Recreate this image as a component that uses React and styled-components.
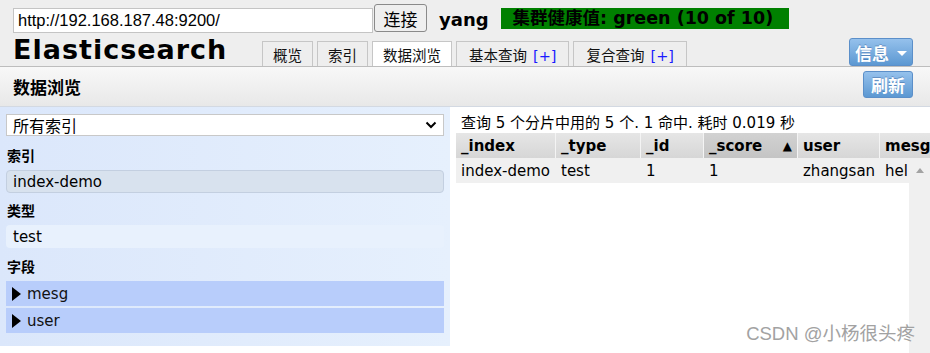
import React from 'react';
import styled, { createGlobalStyle } from 'styled-components';

const GlobalStyle = createGlobalStyle`
  html, body {
    margin: 0;
    padding: 0;
    background: #fff;
  }
  body {
    font-family: "DejaVu Sans", "Noto Sans CJK SC", sans-serif;
    font-size: 14px;
    color: #000;
  }
  * {
    box-sizing: border-box;
  }
`;

const cjk = `"DejaVu Sans", "Noto Sans CJK SC", sans-serif`;

const Page = styled.div`
  position: relative;
  width: 930px;
  height: 353px;
  overflow: hidden;
`;

const Header = styled.div`
  background: #eee;
  border-bottom: 1px solid #bdbdbd;
  height: 67px;
  padding: 4px 17px 0 13px;
  display: flex;
  flex-direction: column;
`;

const TopRow = styled.div`
  display: flex;
  align-items: flex-start;
  height: 30px;
`;

const UrlInput = styled.input`
  width: 360px;
  height: 25px;
  margin-top: 4px;
  border: 1px solid #c4c4c4;
  background: #fff;
  padding: 0 4px;
  font-family: "Liberation Sans", Arial, sans-serif;
  font-size: 16.5px;
  color: #000;
  outline: none;
`;

const ConnectButton = styled.button`
  width: 53px;
  height: 28px;
  margin-left: 1px;
  border: 1px solid #8a8a8a;
  border-radius: 3px;
  background: #efefef;
  font-family: "Noto Sans CJK SC", sans-serif;
  font-size: 17px;
  line-height: 1;
  padding: 0;
  color: #000;
`;

const UserName = styled.div`
  margin-left: 12px;
  margin-top: 6px;
  font-weight: bold;
  font-size: 18px;
  line-height: 20px;
`;

const Health = styled.div`
  margin-left: 12px;
  margin-top: 4px;
  height: 21px;
  width: 288px;
  padding-left: 12px;
  background: #008000;
  color: #000;
  font-family: ${cjk};
  font-weight: bold;
  font-size: 17.5px;
  line-height: 21px;
  white-space: nowrap;
`;

const NavRow = styled.div`
  display: flex;
  align-items: flex-end;
  flex: 1;
`;

const Brand = styled.div`
  width: 249px;
  align-self: flex-start;
  margin-top: 1px;
  font-weight: bold;
  font-size: 27px;
  letter-spacing: 1px;
  line-height: 30px;
`;

const Tabs = styled.div`
  display: flex;
  gap: 4px;
`;

const Tab = styled.div`
  height: 25px;
  padding: 0 ${({ $wide }) => ($wide ? 12 : 10)}px;
  border: 1px solid #c6c6c6;
  border-bottom: none;
  background: ${({ $active }) => ($active ? '#fff' : '#eee')};
  font-family: "Noto Sans CJK SC", sans-serif;
  font-size: 14.5px;
  line-height: 26px;
  color: #111;
  white-space: nowrap;
`;

const Plus = styled.span`
  margin-left: 6px;
  color: #1a1aff;
  font-family: "DejaVu Sans", sans-serif;
`;

const Spacer = styled.div`
  flex: 1;
`;

const BlueButton = styled.button`
  width: ${({ $w }) => $w}px;
  height: ${({ $h }) => $h}px;
  border: 1px solid #5b8fc9;
  border-radius: 3px;
  background: linear-gradient(#95c1ec, #5c98d2);
  color: #fff;
  font-family: "Noto Sans CJK SC", sans-serif;
  font-weight: bold;
  font-size: 17px;
  line-height: 1;
  padding: 0;
  display: flex;
  align-items: center;
  justify-content: center;
  gap: 8px;
  text-shadow: 0 -1px 0 rgba(40, 80, 140, 0.4);
`;

const Caret = styled.span`
  width: 0;
  height: 0;
  border-left: 5px solid transparent;
  border-right: 5px solid transparent;
  border-top: 5px solid #fff;
  margin-top: 2px;
`;

const SectionHead = styled.div`
  height: 40px;
  padding: 4px 17px 0 13px;
  display: flex;
  align-items: flex-start;
  background: linear-gradient(#f8f8f8, #e8e8e8);
  border-bottom: 1px solid #d3d9e2;
`;

const SectionTitle = styled.div`
  flex: 1;
  font-family: "Noto Sans CJK SC", sans-serif;
  font-weight: bold;
  font-size: 17px;
  line-height: 32px;
`;

const Body = styled.div`
  display: flex;
  align-items: flex-start;
`;

const Sidebar = styled.div`
  width: 450px;
  padding: 7px 6px 13px 6px;
  background: linear-gradient(to right, #dbe7fb, #e6f0fd);
  display: flex;
  flex-direction: column;
`;

const Select = styled.div`
  height: 22px;
  border: 1px solid #c8c8c8;
  background: #fff;
  padding: 0 6px;
  display: flex;
  align-items: center;
  justify-content: space-between;
  font-family: "Noto Sans CJK SC", sans-serif;
  font-size: 16px;
`;

const Label = styled.div`
  margin: ${({ $top }) => $top}px 0 5px 1px;
  font-family: "Noto Sans CJK SC", sans-serif;
  font-weight: bold;
  font-size: 14px;
  line-height: 20px;
`;

const Pill = styled.div`
  height: 23px;
  border-radius: 4px;
  padding: 0 6px;
  border: 1px solid ${({ $selected }) => ($selected ? '#c3cfe0' : 'transparent')};
  background: ${({ $selected }) => ($selected ? '#d8e2ee' : '#e8f1fd')};
  font-size: 15px;
  line-height: 22px;
`;

const FieldList = styled.div`
  display: flex;
  flex-direction: column;
  gap: 2px;
`;

const FieldRow = styled.div`
  height: 25px;
  background: #b8cdfb;
  display: flex;
  align-items: center;
  padding-left: 6px;
  gap: 6px;
  font-size: 15px;
  color: #111;
`;

const Arrow = styled.span`
  width: 0;
  height: 0;
  border-top: 7px solid transparent;
  border-bottom: 7px solid transparent;
  border-left: 9px solid #000;
`;

const Results = styled.div`
  flex: 1;
  min-width: 0;
  padding-left: 6px;
  overflow: hidden;
`;

const Summary = styled.div`
  padding: 6px 0 0 5px;
  height: 26px;
  font-family: ${cjk};
  font-size: 15px;
  line-height: 20px;
  white-space: nowrap;
`;

const HeadRow = styled.div`
  display: flex;
  height: 25px;
  width: 700px;
`;

const HeadCell = styled.div`
  flex: none;
  width: ${({ $w }) => $w}px;
  border-right: 1px solid #f4f4f4;
  background: ${({ $sorted }) =>
    $sorted ? 'linear-gradient(#d2d2d2, #c4c4c4)' : 'linear-gradient(#e6e6e6, #d6d6d6)'};
  padding: 0 5px;
  display: flex;
  align-items: center;
  justify-content: space-between;
  font-weight: bold;
  font-size: 15px;
  white-space: nowrap;
`;

const SortMark = styled.span`
  font-size: 12px;
`;

const BodyWrap = styled.div`
  display: flex;
  height: 200px;
`;

const Rows = styled.div`
  flex: 1;
  overflow: hidden;
`;

const DataRow = styled.div`
  display: flex;
  height: 25px;
  background: #f0f0f0;
`;

const DataCell = styled.div`
  flex: none;
  width: ${({ $w }) => $w}px;
  padding: 1px 5px 0;
  font-size: 15px;
  line-height: 25px;
  white-space: nowrap;
  overflow: hidden;
`;

const Scrollbar = styled.div`
  width: 21px;
  background: #f0f0f0;
  display: flex;
  justify-content: center;
  padding-top: 10px;
`;

const UpArrow = styled.span`
  width: 0;
  height: 0;
  border-left: 4.5px solid transparent;
  border-right: 4.5px solid transparent;
  border-bottom: 5px solid #a3a3a3;
`;

const Watermark = styled.div`
  position: absolute;
  right: 15px;
  bottom: 8px;
  font-family: "Liberation Sans", "Noto Sans CJK SC", sans-serif;
  font-size: 18.5px;
  color: #a2a2a2;
  text-shadow: 0 0 1px #fff;
  white-space: nowrap;
`;

const columns = [
  { key: '_index', w: 100 },
  { key: '_type', w: 85 },
  { key: '_id', w: 63 },
  { key: '_score', w: 94, sorted: true },
  { key: 'user', w: 82 },
  { key: 'mesg', w: 29 },
];

const row = { _index: 'index-demo', _type: 'test', _id: '1', _score: '1', user: 'zhangsan', mesg: 'hel' };

const tabs = [
  { label: '概览' },
  { label: '索引' },
  { label: '数据浏览', active: true },
  { label: '基本查询', plus: true },
  { label: '复合查询', plus: true },
];

const App = () => (
  <Page>
    <GlobalStyle />
    <Header>
      <TopRow>
        <UrlInput defaultValue="http://192.168.187.48:9200/" />
        <ConnectButton>连接</ConnectButton>
        <UserName>yang</UserName>
        <Health>集群健康值: green (10 of 10)</Health>
      </TopRow>
      <NavRow>
        <Brand>Elasticsearch</Brand>
        <Tabs>
          {tabs.map((t) => (
            <Tab key={t.label} $active={t.active} $wide={t.plus}>
              {t.label}
              {t.plus && <Plus>[+]</Plus>}
            </Tab>
          ))}
        </Tabs>
        <Spacer />
        <BlueButton $w={64} $h={28}>
          信息 <Caret />
        </BlueButton>
      </NavRow>
    </Header>
    <SectionHead>
      <SectionTitle>数据浏览</SectionTitle>
      <BlueButton $w={50} $h={27}>刷新</BlueButton>
    </SectionHead>
    <Body>
      <Sidebar>
        <Select>
          所有索引
          <svg width="12" height="8" viewBox="0 0 12 8">
            <path d="M1.5 1.5 L6 6 L10.5 1.5" fill="none" stroke="#000" strokeWidth="2" />
          </svg>
        </Select>
        <Label $top={9}>索引</Label>
        <Pill $selected>index-demo</Pill>
        <Label $top={7}>类型</Label>
        <Pill>test</Pill>
        <Label $top={8}>字段</Label>
        <FieldList>
          {['mesg', 'user'].map((f) => (
            <FieldRow key={f}>
              <Arrow />
              {f}
            </FieldRow>
          ))}
        </FieldList>
      </Sidebar>
      <Results>
        <Summary>查询 5 个分片中用的 5 个. 1 命中. 耗时 0.019 秒</Summary>
        <HeadRow>
          {columns.map((c) => (
            <HeadCell key={c.key} $w={c.key === 'mesg' ? 120 : c.w} $sorted={c.sorted}>
              {c.key}
              {c.sorted && <SortMark>▲</SortMark>}
            </HeadCell>
          ))}
        </HeadRow>
        <BodyWrap>
          <Rows>
            <DataRow>
              {columns.map((c) => (
                <DataCell key={c.key} $w={c.w}>
                  {row[c.key]}
                </DataCell>
              ))}
            </DataRow>
          </Rows>
          <Scrollbar>
            <UpArrow />
          </Scrollbar>
        </BodyWrap>
      </Results>
    </Body>
    <Watermark>CSDN @小杨很头疼</Watermark>
  </Page>
);

export default App;
